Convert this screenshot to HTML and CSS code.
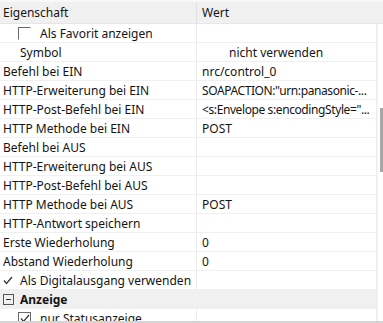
FILE: index.html
```html
<!DOCTYPE html>
<html>
<head>
<meta charset="utf-8">
<link rel="stylesheet" href="styles.css">
</head>
<body>
<div class="grid">
  <div class="head row">
    <div class="c1">Eigenschaft</div>
    <div class="c2">Wert</div>
  </div>
  <div class="main">
    <div class="body">
      <div class="row"><div class="c1 sub"><span class="box open"></span>Als Favorit anzeigen</div><div class="c2"></div></div>
      <div class="row"><div class="c1 ind">Symbol</div><div class="c2 vind">nicht verwenden</div></div>
      <div class="row"><div class="c1">Befehl bei EIN</div><div class="c2">nrc/control_0</div></div>
      <div class="row"><div class="c1">HTTP-Erweiterung bei EIN</div><div class="c2 long">SOAPACTION:"urn:panasonic-...</div></div>
      <div class="row"><div class="c1">HTTP-Post-Befehl bei EIN</div><div class="c2 long">&lt;s:Envelope s:encodingStyle="...</div></div>
      <div class="row"><div class="c1">HTTP Methode bei EIN</div><div class="c2">POST</div></div>
      <div class="row"><div class="c1">Befehl bei AUS</div><div class="c2"></div></div>
      <div class="row"><div class="c1">HTTP-Erweiterung bei AUS</div><div class="c2"></div></div>
      <div class="row"><div class="c1">HTTP-Post-Befehl bei AUS</div><div class="c2"></div></div>
      <div class="row"><div class="c1">HTTP Methode bei AUS</div><div class="c2">POST</div></div>
      <div class="row"><div class="c1">HTTP-Antwort speichern</div><div class="c2"></div></div>
      <div class="row"><div class="c1">Erste Wiederholung</div><div class="c2">0</div></div>
      <div class="row"><div class="c1">Abstand Wiederholung</div><div class="c2">0</div></div>
      <div class="row"><div class="c1 chk"><svg class="tick" width="10" height="9" viewBox="0 0 10 9"><polyline points="1,4.5 3.5,7.5 9,1" fill="none" stroke="#333" stroke-width="1.2"/></svg>Als Digitalausgang verwenden</div><div class="c2"></div></div>
      <div class="row group"><div class="gc"><svg class="minus" width="11" height="11" viewBox="0 0 11 11"><rect x="0.5" y="0.5" width="10" height="10" fill="none" stroke="#555"/><line x1="3" y1="5.5" x2="8" y2="5.5" stroke="#333"/></svg><b>Anzeige</b></div></div>
      <div class="row"><div class="c1 sub"><span class="box"><svg width="10" height="9" viewBox="0 0 10 9"><polyline points="1,4.5 3.5,7.5 9,1" fill="none" stroke="#333" stroke-width="1.2"/></svg></span>nur Statusanzeige</div><div class="c2"></div></div>
    </div>
    <div class="scroll"><div class="thumb"></div></div>
  </div>
</div>
</body>
</html>
```
FILE: styles.css
```css
html, body { margin: 0; padding: 0; background: #fff; }
body {
  font-family: "Noto Sans", "Open Sans", sans-serif;
  font-size: 12px;
  color: #141414;
  width: 383px;
  height: 323px;
  overflow: hidden;
}
.grid { display: flex; flex-direction: column; height: 323px; border-bottom: 2px solid #d4d4d4; box-sizing: border-box; overflow: hidden; }
.row {
  display: grid;
  grid-template-columns: 197px 1fr;
  height: 19px;
  flex: none;
  box-sizing: border-box;
  border-bottom: 1px solid #f0f0f0;
  align-items: center;
  white-space: nowrap;
}
.head {
  height: 24px;
  background: #f0f0f0;
  border-top: 2px solid #f8f8f8;
  border-bottom: 1px solid #e6e6e6;
}
.c1 { padding-left: 3px; height: 100%; display: flex; align-items: center; border-right: 1px solid #ebebeb; overflow: hidden; }
.c2 { padding-left: 5px; height: 100%; display: flex; align-items: center; overflow: hidden; }
.long { letter-spacing: -0.4px; }
.head .c1 { border-right-color: #e0e0e0; }
.main { display: flex; flex: 1; overflow: hidden; }
.body { flex: 1; border-right: 1px solid #ececec; }
.scroll { width: 5px; border-left: 1px solid #f4f4f4; }
.thumb { margin-top: 84px; width: 3px; margin-left: 2px; height: 64px; background: #a8a8a8; }
.sub { padding-left: 18px; }
.ind { padding-left: 20px; }
.vind { padding-left: 32px; }
.box { width: 13px; height: 13px; box-sizing: border-box; border: 1px solid #6a6a6a; margin-right: 9px; display: inline-flex; align-items: center; justify-content: center; }
.box.open { border-right-color: transparent; border-bottom-color: transparent; }
.chk { padding-left: 3px; }
.tick { margin-right: 7px; }
.group { background: #f0f0f0; grid-template-columns: 1fr; border-bottom-color: #f0f0f0; }
.gc { padding-left: 3px; display: flex; align-items: center; height: 100%; }
.minus { margin-right: 6px; }
b { font-weight: bold; }
```
